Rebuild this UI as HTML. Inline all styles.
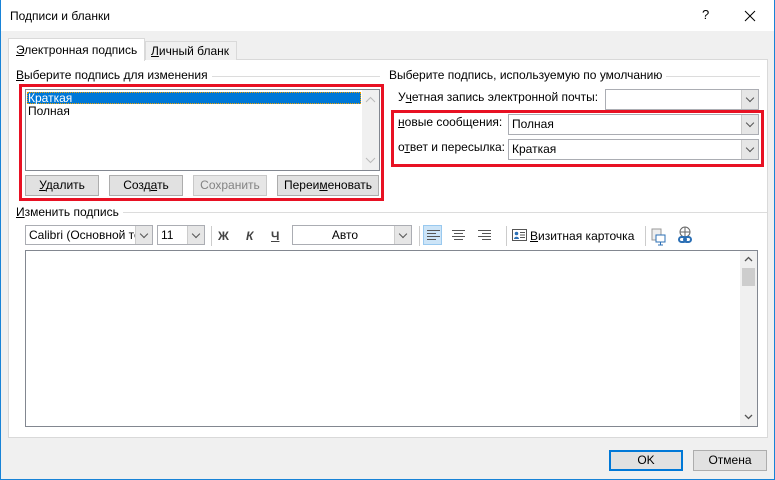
<!DOCTYPE html>
<html><head><meta charset="utf-8"><style>
*{box-sizing:border-box;margin:0;padding:0}
body{width:775px;height:480px;position:relative;background:#f0f0f0;font-family:"Segoe UI","Liberation Sans","DejaVu Sans",sans-serif;font-size:12px;color:#000;overflow:hidden}
.a{position:absolute}
.t{position:absolute;white-space:nowrap;line-height:14px}
.w{background:#fff;padding-right:4px}
.btn{position:absolute;background:#e1e1e1;border:1px solid #adadad;text-align:center;line-height:18px;height:21px}
.cb{position:absolute;background:#fff;border:1px solid #abadb3;height:21px;line-height:19px;padding-left:3px}
.dd{position:absolute;right:0;top:0;bottom:0;width:17px;background:#e6e6e6;border-left:1px solid #ccc}
.dd:after{content:"";position:absolute;left:5px;top:5px;width:5px;height:5px;border-right:1px solid #555;border-bottom:1px solid #555;transform:rotate(45deg)}
.red{position:absolute;border:3px solid #e81123}
.ln{position:absolute;height:1px;background:#dcdcdc}
u{text-decoration:underline}
</style></head><body>
<div class="a" style="left:0;top:0;width:775px;height:480px;border:1px solid #1883d7;border-top:none"></div>
<div class="a" style="left:1px;top:0;width:773px;height:31px;background:#fff"></div>
<div class="t" style="left:10px;top:9px">Подписи и бланки</div>
<div class="t" style="left:702px;top:8px;font-size:13px">?</div>
<svg class="a" style="left:744px;top:10px" width="12" height="12"><path d="M1 1L11 11M11 1L1 11" stroke="#000" stroke-width="1"/></svg>

<div class="a" style="left:8px;top:59px;width:760px;height:379px;background:#fff;border:1px solid #d9d9d9"></div>
<div class="a" style="left:145px;top:41px;width:92px;height:19px;background:#f0f0f0;border:1px solid #d9d9d9;border-bottom:none"></div>
<div class="t" style="left:151px;top:44px"><u>Л</u>ичный бланк</div>
<div class="a" style="left:8px;top:38px;width:137px;height:23px;background:#fff;border:1px solid #d9d9d9;border-bottom:none"></div>
<div class="t" style="left:16px;top:43px"><u>Э</u>лектронная подпись</div>

<div class="ln" style="left:16px;top:76px;width:364px"></div>
<div class="t w" style="left:16px;top:68px"><u>В</u>ыберите подпись для изменения</div>
<div class="red" style="left:19px;top:84px;width:365px;height:117px"></div>
<div class="a" style="left:25px;top:89px;width:355px;height:82px;background:#fff;border:1px solid #828790"></div>
<div class="a" style="left:27px;top:92px;width:334px;height:12px;background:#0078d7;border:1px dotted #f0a000"></div>
<div class="t" style="left:28px;top:91px;color:#fff">Краткая</div>
<div class="t" style="left:28px;top:104px">Полная</div>
<div class="a" style="left:362px;top:90px;width:17px;height:80px;background:#f0f0f0"></div>
<svg class="a" style="left:365px;top:96px" width="11" height="70"><path d="M1 6L5.5 1.5L10 6M1 62L5.5 66.5L10 62" fill="none" stroke="#bbb"/></svg>
<div class="btn" style="left:25px;top:175px;width:74px"><u>У</u>далить</div>
<div class="btn" style="left:109px;top:175px;width:74px">Созд<u>а</u>ть</div>
<div class="btn" style="left:193px;top:175px;width:74px;color:#838383;background:#e6e6e6;border-color:#c8c8c8">Сохранить</div>
<div class="btn" style="left:277px;top:175px;width:102px">Переи<u>м</u>еновать</div>

<div class="ln" style="left:389px;top:76px;width:371px"></div>
<div class="t w" style="left:389px;top:68px">Выберите подпись, используемую по умолчанию</div>
<div class="t" style="left:398px;top:90px">У<u>ч</u>етная запись электронной почты:</div>
<div class="cb" style="left:605px;top:89px;width:154px"><div class="dd"></div></div>
<div class="red" style="left:391px;top:110px;width:373px;height:57px"></div>
<div class="t" style="left:398px;top:115px"><u>н</u>овые сообщения:</div>
<div class="cb" style="left:508px;top:114px;width:251px">Полная<div class="dd"></div></div>
<div class="t" style="left:398px;top:140px">о<u>т</u>вет и пересылка:</div>
<div class="cb" style="left:508px;top:139px;width:251px">Краткая<div class="dd"></div></div>

<div class="ln" style="left:16px;top:212px;width:751px"></div>
<div class="t w" style="left:16px;top:205px"><u>И</u>зменить подпись</div>
<div class="cb" style="left:25px;top:225px;width:128px;height:20px;line-height:18px;overflow:hidden">Calibri (Основной те<div class="dd"></div></div>
<div class="cb" style="left:157px;top:225px;width:48px;height:20px;line-height:18px">11<div class="dd"></div></div>
<div class="a" style="left:211px;top:226px;width:1px;height:20px;background:#ccc"></div>
<div class="t" style="left:218px;top:229px;font-weight:bold;color:#444">Ж</div>
<div class="t" style="left:246px;top:229px;font-weight:bold;font-style:italic;color:#444">К</div>
<div class="t" style="left:271px;top:229px;font-weight:bold;color:#444;text-decoration:underline">Ч</div>
<div class="cb" style="left:292px;top:225px;width:120px;height:20px;line-height:18px;text-align:center;padding-right:17px">Авто<div class="dd"></div></div>
<div class="a" style="left:419px;top:226px;width:1px;height:20px;background:#ccc"></div>
<div class="a" style="left:423px;top:225px;width:19px;height:20px;background:#cce4f7;border:1px solid #99c9ef"></div>
<svg class="a" style="left:426px;top:229px" width="70" height="12"><g stroke="#555" stroke-width="1"><path d="M1 1.5h13M1 4.5h9M1 7.5h13M1 10.5h9"/><path d="M26 1.5h13M28 4.5h9M26 7.5h13M28 10.5h9"/><path d="M52 1.5h13M56 4.5h9M52 7.5h13M56 10.5h9"/></g></svg>
<div class="a" style="left:506px;top:226px;width:1px;height:20px;background:#ccc"></div>
<svg class="a" style="left:512px;top:229px" width="16" height="13"><rect x="0.5" y="0.5" width="14" height="11" fill="#fff" stroke="#555"/><circle cx="4.5" cy="4.5" r="1.8" fill="#2b6fb5"/><path d="M2 10c0-3 5-3 5 0z" fill="#2b6fb5"/><path d="M8 3.5h5M8 6h5M8 8.5h5" stroke="#555"/></svg>
<div class="t" style="left:530px;top:229px"><u>В</u>изитная карточка</div>
<div class="a" style="left:645px;top:226px;width:1px;height:20px;background:#ccc"></div>
<svg class="a" style="left:651px;top:226px" width="48" height="20"><rect x="1" y="3" width="9" height="11" fill="#eee" stroke="#999"/><rect x="5" y="9" width="9" height="7" fill="#fff" stroke="#2b6fb5"/><path d="M9.5 16v3M7 19h5" stroke="#2b6fb5"/><circle cx="34" cy="6" r="5" fill="none" stroke="#666"/><path d="M29 6h10M34 1v10" stroke="#666"/><rect x="28" y="11" width="7" height="5" rx="2.5" fill="none" stroke="#2b6fb5" stroke-width="2"/><rect x="33" y="11" width="7" height="5" rx="2.5" fill="none" stroke="#2b6fb5" stroke-width="2"/></svg>

<div class="a" style="left:25px;top:250px;width:733px;height:177px;background:#fff;border:1px solid #828790"></div>
<div class="a" style="left:740px;top:251px;width:17px;height:175px;background:#f0f0f0"></div>
<div class="a" style="left:742px;top:268px;width:13px;height:18px;background:#cdcdcd"></div>
<svg class="a" style="left:744px;top:256px" width="9" height="165"><path d="M1 5L4.5 1.5L8 5M1 159L4.5 162.5L8 159" fill="none" stroke="#555" stroke-width="1.3"/></svg>

<div class="btn" style="left:609px;top:450px;width:74px;border:2px solid #0078d7;line-height:17px">OK</div>
<div class="btn" style="left:693px;top:450px;width:74px;line-height:19px">Отмена</div>
</body></html>
